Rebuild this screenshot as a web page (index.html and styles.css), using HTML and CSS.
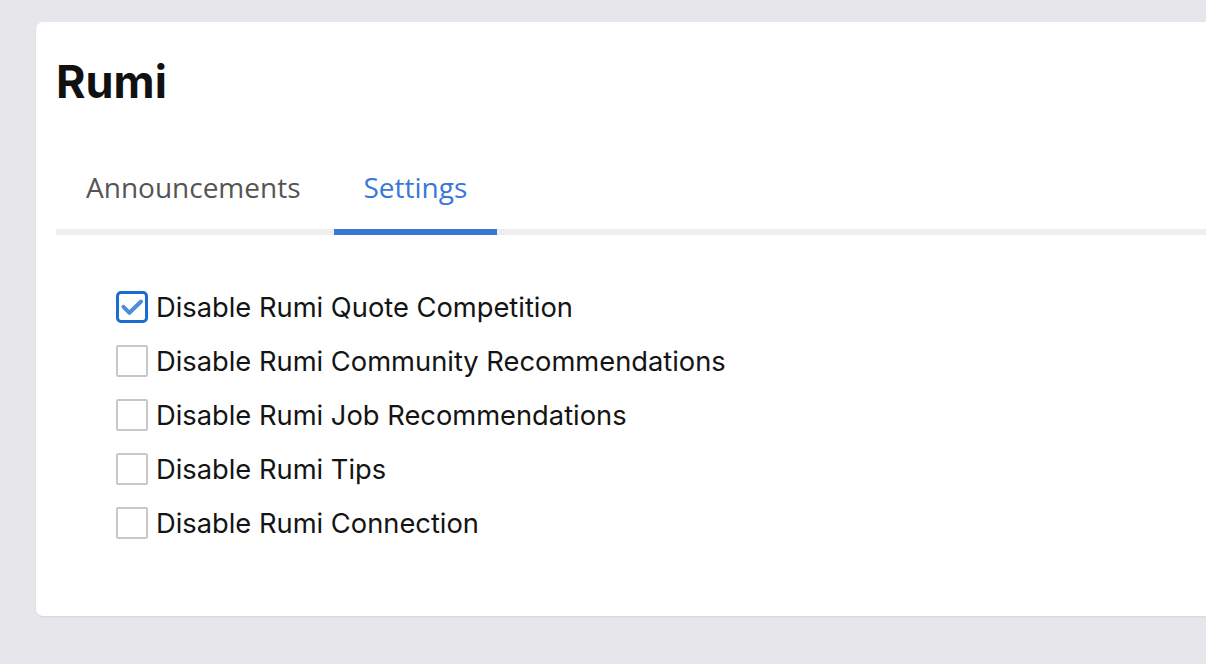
FILE: index.html
```html
<!DOCTYPE html>
<html>
<head>
<meta charset="utf-8">
<link rel="stylesheet" href="styles.css">
</head>
<body>
<div class="page">
  <div class="card">
    <h1 class="title">Rumi</h1>
    <div class="tabs">
      <div class="tab">Announcements</div>
      <div class="tab active">Settings</div>
    </div>
    <ul class="options">
      <li class="option"><span class="box checked"><svg viewBox="0 0 26 26" width="26" height="26"><path d="M4.5 12.8 L10.4 18.8 L22 7.5" fill="none" stroke="#4a8fd8" stroke-width="4" stroke-linecap="round" stroke-linejoin="round"/></svg></span><span class="label">Disable Rumi Quote Competition</span></li>
      <li class="option"><span class="box"></span><span class="label">Disable Rumi Community Recommendations</span></li>
      <li class="option"><span class="box"></span><span class="label">Disable Rumi Job Recommendations</span></li>
      <li class="option"><span class="box"></span><span class="label">Disable Rumi Tips</span></li>
      <li class="option"><span class="box"></span><span class="label">Disable Rumi Connection</span></li>
    </ul>
  </div>
</div>
</body>
</html>
```
FILE: styles.css
```css
html, body {
  margin: 0;
  padding: 0;
  background: #e7e7eb;
  width: 1206px;
  height: 664px;
  overflow: hidden;
}
.page {
  padding: 22px 0 0 36px;
}
.card {
  background: #fff;
  border-radius: 7px 0 0 7px;
  box-shadow: 0 1px 2px rgba(0,0,0,0.08);
  height: 594px;
  padding: 0 0 0 20px;
  box-sizing: border-box;
}
.title {
  margin: 0;
  padding-top: 34px;
  font-family: Inter, "Liberation Sans", sans-serif;
  font-weight: 700;
  font-size: 45px;
  line-height: 52px;
  color: #111;
}
.tabs {
  display: flex;
  margin-top: 61px;
  border-bottom: 6px solid #eeeeee;
}
.tab {
  font-family: "Open Sans", sans-serif;
  font-size: 28px;
  line-height: 36px;
  color: #555;
  padding: 0 30px 24px;
  margin-right: 3px;
  margin-bottom: -6px;
  border-bottom: 6px solid transparent;
}
.tab.active {
  color: #3a78d8;
  border-bottom-color: #3a78d8;
}
.options {
  list-style: none;
  margin: 0;
  padding: 45px 0 0 60px;
}
.option {
  display: flex;
  align-items: center;
  height: 54px;
}
.box {
  width: 32px;
  height: 32px;
  box-sizing: border-box;
  border: 2px solid #c8c8c8;
  border-radius: 2px;
  margin-right: 8px;
  display: flex;
  align-items: center;
  justify-content: center;
  flex-shrink: 0;
}
.box.checked {
  border: 3px solid #1b6bd0;
  border-radius: 5px;
}
.label {
  font-family: Inter, "Liberation Sans", sans-serif;
  font-size: 27.3px;
  color: #141414;
}
```
